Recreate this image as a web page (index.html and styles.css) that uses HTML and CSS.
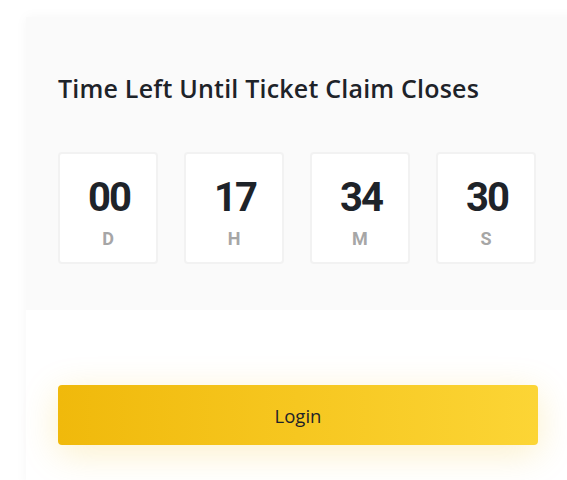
FILE: index.html
```html
<!DOCTYPE html>
<html>
<head>
<meta charset="utf-8">
<link rel="stylesheet" href="styles.css">
</head>
<body>
<div class="card">
  <div class="top">
    <h2 class="title">Time Left Until Ticket Claim Closes</h2>
    <div class="timer">
      <div class="unit"><div class="num">00</div><div class="lbl">D</div></div>
      <div class="unit"><div class="num">17</div><div class="lbl">H</div></div>
      <div class="unit"><div class="num">34</div><div class="lbl">M</div></div>
      <div class="unit"><div class="num">30</div><div class="lbl">S</div></div>
    </div>
  </div>
  <div class="bottom">
    <button class="login">Login</button>
  </div>
</div>
</body>
</html>
```
FILE: styles.css
```css
html, body {
  margin: 0;
  padding: 0;
  background: #ffffff;
  overflow: hidden;
}
.card {
  margin: 17px 0 0 26px;
  width: 570px;
  background: #ffffff;
  box-shadow: 0 0 12px rgba(0, 0, 0, 0.04);
  font-family: Roboto, "Liberation Sans", sans-serif;
}
.top {
  background: #fafafa;
  padding: 55px 32px 46px;
}
.title {
  margin: 0;
  font-family: "Open Sans", Roboto, sans-serif;
  font-size: 25px;
  line-height: 32px;
  font-weight: 600;
  letter-spacing: 0.2px;
  color: #1e2329;
}
.timer {
  display: flex;
  gap: 26px;
  margin-top: 48px;
}
.unit {
  width: 100px;
  height: 112px;
  box-sizing: border-box;
  background: #ffffff;
  border: 2px solid #f2f2f2;
  border-radius: 4px;
  padding-top: 24px;
  display: flex;
  flex-direction: column;
  align-items: center;
}
.num {
  font-size: 40px;
  line-height: 40px;
  font-weight: 700;
  letter-spacing: -2px;
  margin-right: -2px;
  color: #1e2329;
}
.lbl {
  margin-top: 11px;
  font-size: 18px;
  line-height: 20px;
  font-weight: 700;
  color: #a6a6a6;
}
.bottom {
  padding: 75px 32px 40px;
}
.login {
  display: block;
  width: 480px;
  height: 60px;
  border: none;
  border-radius: 4px;
  background: linear-gradient(90deg, #f0b90b 0%, #fcd535 100%);
  box-shadow: 0 8px 36px rgba(240, 185, 11, 0.22);
  font-family: "Open Sans", Roboto, sans-serif;
  font-size: 18.5px;
  font-weight: 500;
  color: #1e2329;
}
```
